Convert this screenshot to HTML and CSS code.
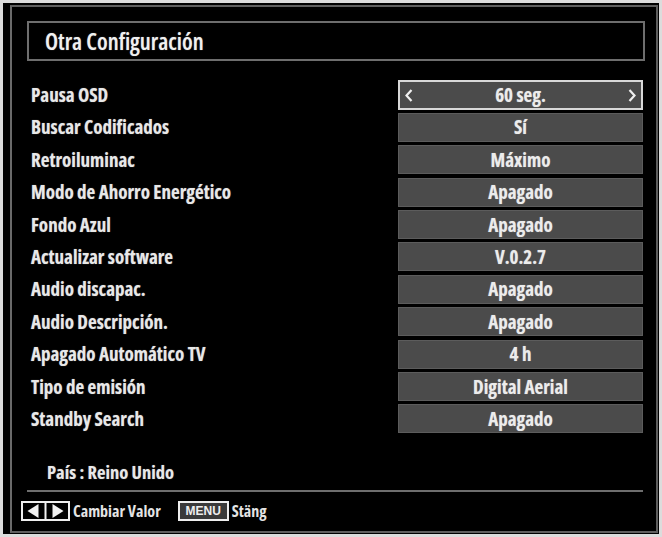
FILE: index.html
```html
<!DOCTYPE html>
<html lang="es">
<head>
<meta charset="utf-8">
<title>Otra Configuración</title>
<link rel="stylesheet" href="styles.css">
</head>
<body>
<div class="screen">
  <div class="frame">
    <div class="title-box"><span class="title">Otra Configuración</span></div>
    <div class="rows">
      <div class="row"><span class="label">Pausa OSD</span>
        <div class="value selected">
          <svg class="chev" width="8" height="13" viewBox="0 0 8 13"><path d="M6.5 1 L1.5 6.5 L6.5 12" fill="none" stroke="#f0f0f0" stroke-width="2.2"/></svg>
          <span>60 seg.</span>
          <svg class="chev" width="8" height="13" viewBox="0 0 8 13"><path d="M1.5 1 L6.5 6.5 L1.5 12" fill="none" stroke="#f0f0f0" stroke-width="2.2"/></svg>
        </div></div>
      <div class="row"><span class="label">Buscar Codificados</span><div class="value">Sí</div></div>
      <div class="row"><span class="label">Retroiluminac</span><div class="value">Máximo</div></div>
      <div class="row"><span class="label">Modo de Ahorro Energético</span><div class="value">Apagado</div></div>
      <div class="row"><span class="label">Fondo Azul</span><div class="value">Apagado</div></div>
      <div class="row"><span class="label">Actualizar software</span><div class="value">V.0.2.7</div></div>
      <div class="row"><span class="label">Audio discapac.</span><div class="value">Apagado</div></div>
      <div class="row"><span class="label">Audio Descripción.</span><div class="value">Apagado</div></div>
      <div class="row"><span class="label">Apagado Automático TV</span><div class="value">4 h</div></div>
      <div class="row"><span class="label">Tipo de emisión</span><div class="value">Digital Aerial</div></div>
      <div class="row"><span class="label">Standby Search</span><div class="value">Apagado</div></div>
    </div>
    <div class="country">País : Reino Unido</div>
    <div class="separator"></div>
    <div class="hints">
      <span class="key arrows">
        <svg width="45" height="16" viewBox="0 0 45 16"><path d="M15.5 1 L4.5 8 L15.5 15 Z" fill="#f2f2f2"/><rect x="21.5" y="0" width="2" height="16" fill="#f2f2f2"/><path d="M29.5 1 L40.5 8 L29.5 15 Z" fill="#f2f2f2"/></svg>
      </span>
      <span class="hint-text">Cambiar Valor</span>
      <span class="key menu">MENU</span>
      <span class="hint-text">Stäng</span>
    </div>
  </div>
</div>
</body>
</html>
```
FILE: styles.css
```css
* { box-sizing: border-box; }
html, body { margin: 0; padding: 0; }
body {
  width: 662px;
  height: 537px;
  background: #dcdcdc;
  font-family: "Open Sans", "DejaVu Sans Condensed", sans-serif;
  font-stretch: 75%;
  font-weight: bold;
  color: #e8e8e8;
  overflow: hidden;
}
.screen {
  width: 656px;
  height: 531px;
  margin: 3px 0 0 3px;
  background: #000;
  padding: 2px 1px 1px 7px;
}
.frame {
  height: 100%;
  border: 2px solid #5e5e5e;
  border-left-color: #6a6a6a;
  padding: 14px 0 0 15px;
}
.title-box {
  width: 618px;
  height: 40px;
  border: 2px solid #6e6e6e;
  display: flex;
  align-items: center;
  padding-left: 16px;
}
.title {
  font-size: 23px;
  font-weight: 600;
  color: #f0f0f0;
  text-shadow: 0 0 1px rgba(255,255,255,0.5);
}
.rows {
  margin-top: 19.5px;
  display: flex;
  flex-direction: column;
  gap: 3.4px;
}
.row {
  height: 29px;
  display: flex;
  align-items: center;
  justify-content: space-between;
  width: 616px;
}
.label {
  padding-left: 4px;
  font-size: 19px;
  text-shadow: 0 0 1px rgba(255,255,255,0.45);
}
.value {
  width: 245px;
  height: 29px;
  background: #4b4b4b;
  border: 1px solid #5c5c5c;
  display: flex;
  align-items: center;
  justify-content: center;
  font-size: 19px;
  color: #ececec;
  text-shadow: 0 0 1px rgba(255,255,255,0.45);
}
.value.selected {
  height: 30px;
  border: 2px solid #d8d8d8;
  justify-content: space-between;
  padding: 0 5px;
}
.chev { display: block; }
.country {
  margin-top: 27px;
  padding-left: 20px;
  font-size: 18.5px;
  height: 24px;
  line-height: 24px;
  text-shadow: 0 0 1px rgba(255,255,255,0.45);
}
.separator {
  width: 616px;
  height: 2px;
  background: #6e6e6e;
  margin-top: 6px;
}
.hints {
  margin-top: 9px;
  margin-left: -6px;
  display: flex;
  align-items: center;
  height: 20px;
}
.key {
  height: 20px;
  border: 2px solid #eeeeee;
  display: flex;
  align-items: center;
  justify-content: center;
}
.arrows { width: 49px; }
.arrows svg { display: block; }
.menu {
  width: 51px;
  margin-left: 17px;
  font-family: "Liberation Sans", sans-serif;
  font-stretch: normal;
  font-size: 12px;
  color: #eeeeee;
  background: #3a3a3a;
}
.hint-text {
  font-size: 16px;
  margin-left: 3px;
  color: #e4e4e4;
}
```
